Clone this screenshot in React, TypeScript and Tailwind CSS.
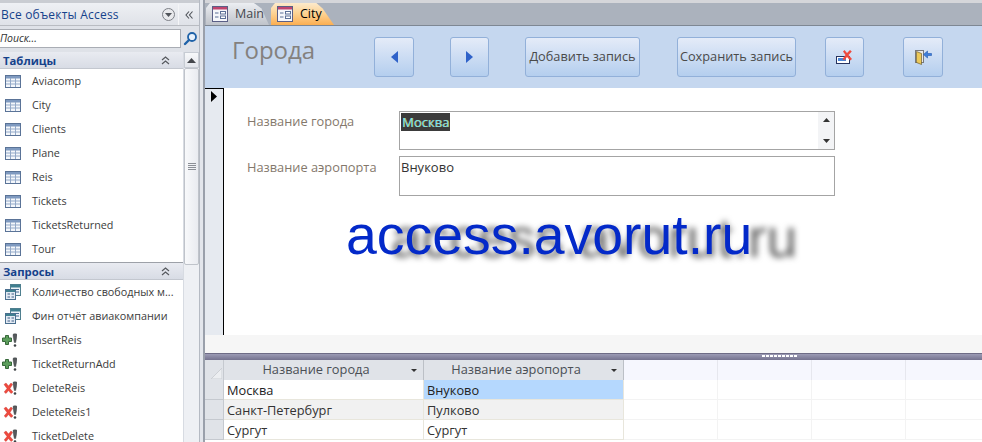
import type { ReactNode } from 'react';

const tables = ['Aviacomp', 'City', 'Clients', 'Plane', 'Reis', 'Tickets', 'TicketsReturned', 'Tour'];

const queries: { name: string; kind: 'select' | 'append' | 'delete' }[] = [
  { name: 'Количество свободных м...', kind: 'select' },
  { name: 'Фин отчёт авиакомпании', kind: 'select' },
  { name: 'InsertReis', kind: 'append' },
  { name: 'TicketReturnAdd', kind: 'append' },
  { name: 'DeleteReis', kind: 'delete' },
  { name: 'DeleteReis1', kind: 'delete' },
  { name: 'TicketDelete', kind: 'delete' },
];

const rows = [
  ['Москва', 'Внуково'],
  ['Санкт-Петербург', 'Пулково'],
  ['Сургут', 'Сургут'],
];

const TableIcon = () => (
  <svg width="16" height="13" viewBox="0 0 16 13" className="shrink-0">
    <rect x="0.5" y="0.5" width="15" height="12" fill="#f4f7fb" stroke="#5a7397" />
    <rect x="1" y="1" width="14" height="2.5" fill="#7f9ac0" />
    <path d="M1 6h14M1 9h14M5.5 3v9M10.5 3v9" stroke="#93a9c8" strokeWidth="1" />
  </svg>
);

const QueryIcon = () => (
  <svg width="16" height="16" viewBox="0 0 16 16" className="shrink-0">
    <rect x="5.500" y="0.500" width="10" height="11" fill="#eef3f8" stroke="#4f7f8f" />
    <rect x="6" y="1" width="9" height="2.500" fill="#3f7f8f" />
    <path d="M11 5.500h3M11 8h3" stroke="#4a6f96" />
    <rect x="0.500" y="5.500" width="10" height="10" fill="#e3eaf3" stroke="#4a6f8f" />
    <rect x="1" y="6" width="9" height="2" fill="#3f7f8f" />
    <path d="M2.500 10h2.500M6.500 10h2.500M2.500 13h2.500M6.500 13h2.500" stroke="#3f5f86" />
  </svg>
);

const Bang = () => (
  <>
    <path d="M11 1.500C11 .6 15 .6 15 1.500c0 2-.8 5.500-1.300 8h-1.400C11.800 7 11 3.500 11 1.500z" fill="#55595c" stroke="#33373a" strokeWidth="0.400" />
    <circle cx="13" cy="12.500" r="1.300" fill="#3f4346" />
  </>
);

const AppendIcon = () => (
  <svg width="15" height="15" viewBox="0 0 15 15" className="-ml-[3px] mr-[1px] shrink-0">
    <path d="M3.500 5V2.500h3V5H9.500v3.500H6.500V11.500h-3V8.500H.5V5z" fill="#5d9f5d" stroke="#37683a" />
    <Bang />
  </svg>
);

const DeleteIcon = () => (
  <svg width="15" height="15" viewBox="0 0 15 15" className="-ml-[3px] mr-[1px] shrink-0">
    <path d="M2 3.500L4 2l2.500 3L9 2l1.500 1.500L8 7.500l3 3.500-2 1.500-2.500-3-2.500 3L2.200 11l2.800-3.500z" fill="#ee4a3e" stroke="#c9302a" strokeWidth="0.400" />
    <Bang />
  </svg>
);

const FormTabIcon = () => (
  <svg width="16" height="16" viewBox="0 0 16 16" className="shrink-0">
    <rect x="0.500" y="0.500" width="15" height="15" fill="#f6f7fb" stroke="#5b5f86" />
    <rect x="1" y="1" width="14" height="2.500" fill="#c0456f" />
    <path d="M3 7h3.500M3 11h3.500" stroke="#5b6f96" strokeWidth="1" />
    <rect x="8.500" y="5.500" width="5" height="2.500" fill="#fff" stroke="#5b6f96" />
    <rect x="8.500" y="10" width="5" height="2.500" fill="#fff" stroke="#5b6f96" />
  </svg>
);

const DoubleChevronUp = () => (
  <svg width="9" height="9" viewBox="0 0 9 9" className="shrink-0">
    <path d="M1 4l3.500-3L8 4M1 8l3.500-3L8 8" fill="none" stroke="#56595e" strokeWidth="1.200" />
  </svg>
);

const GroupHeader = ({ label }: { label: string }) => (
  <div className="flex h-[17px] items-center justify-between border-b border-[#c3c7cf] bg-gradient-to-b from-[#e9ebf1] to-[#d8dce5] pl-[3px] pr-[13px] pt-[1px]">
    <span className="text-[11.300px] font-bold leading-none text-[#15428b]">{label}</span>
    <DoubleChevronUp />
  </div>
);

const NavRow = ({ icon, label }: { icon: ReactNode; label: string }) => (
  <div className="flex h-6 items-center text-[10.800px] text-[#3b3b3b]">
    <span className="flex w-8 shrink-0 items-center pl-[5px]">{icon}</span>
    <span className="whitespace-nowrap leading-[12px]">{label}</span>
  </div>
);

const queryIcon = (kind: 'select' | 'append' | 'delete') => {
  if (kind === 'select') return <QueryIcon />;
  if (kind === 'append') return <AppendIcon />;
  return <DeleteIcon />;
};

const Scrollbar = () => (
  <div className="flex w-[16px] shrink-0 flex-col border-l border-[#d7dbe2] bg-[#eef0f4]">
    <div className="flex h-[16px] items-center justify-center border border-[#c7ccd4] bg-gradient-to-b from-[#f7f8fa] to-[#e3e6ec]">
      <svg width="9" height="5" viewBox="0 0 9 5"><path d="M4.500 0L9 5H0z" fill="#44474c" /></svg>
    </div>
    <div className="flex h-[197px] items-center justify-center rounded-[2px] border border-[#bfc3ca] bg-gradient-to-r from-[#f8f9fb] to-[#e9ebf0]">
      <div className="flex w-[8px] flex-col gap-[1px]">
        <div className="h-px bg-[#8b8f96]" />
        <div className="h-px bg-[#8b8f96]" />
        <div className="h-px bg-[#8b8f96]" />
        <div className="h-px bg-[#8b8f96]" />
      </div>
    </div>
  </div>
);

const Sidebar = () => (
  <aside className="flex h-full w-[199px] shrink-0 flex-col overflow-hidden bg-white">
    <div className="h-[3px] bg-[#c9ccd2]" />
    <div className="flex h-[23px] items-center border-b border-[#b9bcc2] bg-gradient-to-b from-[#eef0f4] to-[#dfe2e8] pt-[1px]">
      <span className="ml-[1px] flex-1 whitespace-nowrap text-[12px] tracking-[0.2px] text-[#15428b]">Все объекты Access</span>
      <span className="flex h-[13px] w-[13px] items-center justify-center rounded-full border border-[#7d8087] bg-[#e8e9ec]">
        <svg width="7" height="4" viewBox="0 0 7 4"><path d="M0 0h7L3.500 4z" fill="#50545a" /></svg>
      </span>
      <span className="ml-[3px] flex h-[21px] w-[21px] items-center justify-center border-l border-[#f4f5f7]">
        <svg width="8" height="8" viewBox="0 0 8 8"><path d="M4 0.500L1 4l3 3.500M7.500 0.500L4.500 4l3 3.500" fill="none" stroke="#4d5157" strokeWidth="1.100" /></svg>
      </span>
    </div>
    <div className="flex h-[26px] items-center bg-[#dfe2e8] pb-[1px]">
      <div className="flex h-[19px] w-[181px] items-center overflow-hidden border border-l-0 border-[#a9adb4] bg-white">
        <span className="text-[10.500px] italic text-[#333]">Поиск...</span>
      </div>
      <svg width="15" height="15" viewBox="0 0 15 15" className="ml-[2px]">
        <circle cx="9" cy="6" r="4" fill="#e8f1fb" stroke="#1f62a8" strokeWidth="1.800" />
        <path d="M6 9l-4 4" stroke="#1f62a8" strokeWidth="2.400" strokeLinecap="round" />
      </svg>
    </div>
    <div className="flex min-h-0 flex-1">
      <div className="min-w-0 flex-1">
        <GroupHeader label="Таблицы" />
        {tables.map((t) => (
          <NavRow key={t} icon={<TableIcon />} label={t} />
        ))}
        <div className="h-[2px] border-b border-[#9da1a8]" />
        <GroupHeader label="Запросы" />
        {queries.map((q) => (
          <NavRow key={q.name} icon={queryIcon(q.kind)} label={q.name} />
        ))}
      </div>
      <Scrollbar />
    </div>
  </aside>
);

const Tab = ({ label, active }: { label: string; active?: boolean }) => (
  <div
    className={`flex h-[22px] w-[63px] items-center gap-[7px] pl-[6px] text-[12.500px] ${
      active
        ? 'bg-gradient-to-b from-[#fdeacb] via-[#fdd18f] to-[#fbae50] font-medium text-black [clip-path:polygon(0_5px,4px_0,72%_0,82%_25%,100%_100%,0_100%)]'
        : 'bg-gradient-to-b from-[#eceef2] to-[#bfc3ca] text-[#44484e] [clip-path:polygon(0_5px,4px_0,76%_0,88%_25%,100%_100%,0_100%)]'
    }`}
  >
    <FormTabIcon />
    <span>{label}</span>
  </div>
);

const FormButton = ({ w, ml, children }: { w: string; ml: string; children: ReactNode }) => (
  <button
    className={`flex h-10 shrink-0 items-center justify-center rounded-[3px] border border-[#92b0d9] bg-gradient-to-b from-[#e4ebf8] to-[#b4ceee] text-[12.750px] text-[#4a4a4a] ${w} ${ml}`}
  >
    {children}
  </button>
);

const DeleteRecordIcon = () => (
  <svg width="17" height="14" viewBox="0 0 17 14">
    <rect x="0.500" y="6.500" width="13" height="7" fill="#fff" stroke="#27335f" />
    <rect x="2" y="8" width="8" height="3" fill="#4a86d8" />
    <path d="M7 1.500L8.500 0l2.500 3L14 0l1.800 1.500L12.500 5l3.500 4-1.800 1.500L11 7l-2.800 3.500L6.500 9l3-4z" fill="#ee4a3e" />
  </svg>
);

const ExitIcon = () => (
  <svg width="17" height="15" viewBox="0 0 17 15">
    <rect x="0.500" y="0.500" width="8" height="12" fill="#e8e8e8" stroke="#77797d" />
    <path d="M1.500 1.500l5 2v11l-5-2z" fill="#ecc95a" stroke="#5a4a1c" strokeWidth="0.600" />
    <path d="M16.500 3.500h-4V1L8.500 4.500l4 3.500V5.500h4z" fill="#3f7fdc" stroke="#2359ae" strokeWidth="0.600" />
  </svg>
);

const FormField = ({ label, pt, children }: { label: string; pt: string; children: ReactNode }) => (
  <div className="flex items-start">
    <span className={`w-[152px] shrink-0 whitespace-nowrap text-[12.800px] leading-[18px] text-[#84786c] ${pt}`}>{label}</span>
    {children}
  </div>
);

const CityForm = () => (
  <div className="flex h-[247px] bg-white">
    <div className="flex w-[19px] shrink-0 justify-center border-r-[1px] border-t border-black bg-[#e6eaf0] pt-[2px]">
      <svg width="8" height="11" viewBox="0 0 8 11"><path d="M1 0l6 5.500L1 11z" fill="#000" /></svg>
    </div>
    <div className="flex min-w-0 flex-1 flex-col pl-[23px] pt-[23px]">
      <FormField label="Название города" pt="pt-[1px]">
        <div className="flex h-[39px] w-[436px] items-start justify-between border border-[#a4a4a4] bg-white">
          <span className="ml-[1px] mt-[1px] bg-[#3b3b3b] px-[1px] text-[13px] leading-[18px] text-[#7fe0e8] [text-shadow:0.5px_0_0_#d9c96a]">Москва</span>
          <div className="flex h-full w-[16px] flex-col items-center justify-between bg-[#f3f4f6] py-[6px]">
            <svg width="7" height="4" viewBox="0 0 7 4"><path d="M3.500 0L7 4H0z" fill="#333" /></svg>
            <svg width="7" height="4" viewBox="0 0 7 4"><path d="M0 0h7L3.500 4z" fill="#333" /></svg>
          </div>
        </div>
      </FormField>
      <div className="mt-[6px]">
        <FormField label="Название аэропорта" pt="pt-[2px]">
          <div className="h-[40px] w-[436px] border border-[#a4a4a4] bg-white pl-[1px] text-[13px] leading-[20px] text-[#333]">Внуково</div>
        </FormField>
      </div>
      <div className="ml-[99px] mt-[9px] whitespace-nowrap font-['Liberation_Sans',Arial,sans-serif] text-[55.400px] leading-[60px] text-[#0329c9] [text-shadow:45px_3px_6px_#5f5f5f]">
        access.avorut.ru
      </div>
    </div>
  </div>
);

const Datasheet = () => (
  <div className="flex-1 overflow-hidden bg-white text-[12.800px] text-[#333]">
    <div className="flex h-[20px]">
      <div className="relative w-[19px] shrink-0 border-r border-[#c5c9cf] bg-[#e0e3e8]">
        <svg width="11" height="11" viewBox="0 0 11 11" className="absolute bottom-[1px] right-[1px]"><path d="M11 0v11H0z" fill="#eceef1" stroke="#cdd0d5" /></svg>
      </div>
      {['Название города', 'Название аэропорта'].map((h) => (
        <div key={h} className="relative flex w-[200px] shrink-0 items-center justify-center border-r border-[#bcc0c6] bg-[#e0e3e8] pr-[15px] text-[#4a4f55]">
          {h}
          <svg width="6" height="3" viewBox="0 0 6 3" className="absolute right-[6px] top-[9px]"><path d="M0 0h6L3 3z" fill="#333" /></svg>
        </div>
      ))}
      {[94, 94, 94, 94].map((w, i) => (
        <div key={i} className="h-full shrink-0 border-r border-[#e6e7ee] bg-[#f6f7fe]" style={{ width: w }} />
      ))}
      <div className="flex-1 bg-[#f6f7fe]" />
    </div>
    {rows.map((r, i) => (
      <div key={r[0]} className="flex h-[20px]">
        <div className="w-[19px] shrink-0 border-b border-r border-[#c5c9cf] bg-[#e0e3e8]" />
        <div className={`flex w-[200px] shrink-0 items-center border-b border-r border-[#e8e6dc] pl-[3px] pt-[2px] ${i === 1 ? 'bg-[#f1f1f1]' : 'bg-white'} ${i === 0 ? 'text-[#222]' : ''}`}>{r[0]}</div>
        <div className={`flex w-[200px] shrink-0 items-center border-b border-r border-[#e8e6dc] pl-[3px] pt-[2px] ${i === 0 ? 'bg-[#b5d8fe] text-[#222]' : i === 1 ? 'bg-[#f1f1f1]' : 'bg-white'}`}>{r[1]}</div>
        {[94, 94, 94, 94].map((w, j) => (
          <div key={j} className="h-full shrink-0 border-b border-r border-[#f3f3f3]" style={{ width: w }} />
        ))}
        <div className="flex-1 border-b border-[#f3f3f3]" />
      </div>
    ))}
  </div>
);

export default function App() {
  return (
    <div className="flex h-[442px] w-[982px] overflow-hidden bg-[#abb2bd] font-['Open_Sans','Noto_Sans',sans-serif]">
      <Sidebar />
      <div className="w-[6px] shrink-0 border-l border-r-2 border-l-[#b5bac3] border-r-[#9aa0ab] bg-[#e3e6ec]" />
      <main className="flex min-w-0 flex-1 flex-col">
        <div className="h-[3px] bg-[#d5d6da]" />
        <div className="flex h-[23px] items-end gap-[2px] border-b border-[#7e8793] bg-[#abb2bd] pl-[1px]">
          <Tab label="Main" />
          <Tab label="City" active />
        </div>
        <div className="flex h-[62px] items-center bg-[#c5d7ef] pl-[27px]">
          <h1 className="w-[142px] shrink-0 pb-[15px] text-[24px] font-normal leading-none text-[#84817e]">Города</h1>
          <FormButton w="w-10" ml="ml-0">
            <svg width="7" height="12" viewBox="0 0 7 12"><path d="M7 0v12L0 6z" fill="#2f62c9" /></svg>
          </FormButton>
          <FormButton w="w-[39px]" ml="ml-[36px]">
            <svg width="7" height="12" viewBox="0 0 7 12"><path d="M0 0v12l7-6z" fill="#2f62c9" /></svg>
          </FormButton>
          <FormButton w="w-[115px]" ml="ml-[36px]">Добавить запись</FormButton>
          <FormButton w="w-[119px]" ml="ml-[37px]">Сохранить запись</FormButton>
          <FormButton w="w-[39px]" ml="ml-[29px]"><DeleteRecordIcon /></FormButton>
          <FormButton w="w-[40px]" ml="ml-[39px]"><ExitIcon /></FormButton>
        </div>
        <CityForm />
        <div className="h-[18px] bg-[#f6f6f6]" />
        <div className="relative h-[7px] border-t border-[#6e6c86] bg-gradient-to-b from-[#9c9bb5] to-[#75738f]">
          <div className="absolute left-[557px] top-[1px] flex gap-[1px]">
            {[0, 1, 2, 3, 4, 5, 6, 7, 8].map((d) => (
              <div key={d} className="h-[2px] w-[3px] bg-white" />
            ))}
          </div>
        </div>
        <Datasheet />
      </main>
    </div>
  );
}
